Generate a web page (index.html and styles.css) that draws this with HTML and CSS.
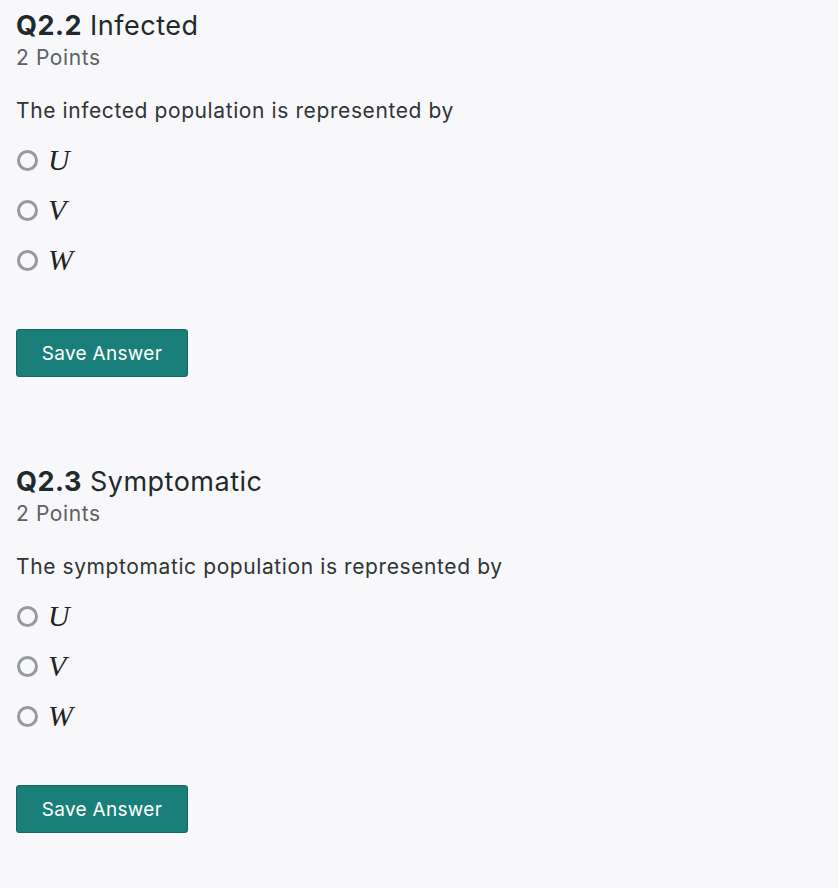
FILE: index.html
```html
<!DOCTYPE html>
<html>
<head>
<meta charset="utf-8">
<link rel="stylesheet" href="styles.css">
</head>
<body>
<div class="page">
  <section class="question">
    <h2 class="q-title"><span class="q-num">Q2.2</span> Infected</h2>
    <div class="q-points">2 Points</div>
    <p class="q-prompt">The infected population is represented by</p>
    <div class="options">
      <label class="option"><span class="radio"></span><span class="math">U</span></label>
      <label class="option"><span class="radio"></span><span class="math">V</span></label>
      <label class="option"><span class="radio"></span><span class="math">W</span></label>
    </div>
    <button class="save">Save Answer</button>
  </section>
  <section class="question">
    <h2 class="q-title"><span class="q-num">Q2.3</span> Symptomatic</h2>
    <div class="q-points">2 Points</div>
    <p class="q-prompt">The symptomatic population is represented by</p>
    <div class="options">
      <label class="option"><span class="radio"></span><span class="math">U</span></label>
      <label class="option"><span class="radio"></span><span class="math">V</span></label>
      <label class="option"><span class="radio"></span><span class="math">W</span></label>
    </div>
    <button class="save">Save Answer</button>
  </section>
</div>
</body>
</html>
```

FILE: styles.css
```css
html, body {
  margin: 0;
  padding: 0;
  background: #f8f8fb;
}
body {
  font-family: Inter, Lato, sans-serif;
  color: #2f3436;
}
.page {
  padding: 8px 16px 0 16px;
  display: flex;
  flex-direction: column;
  gap: 87px;
}
.question {
  display: flex;
  flex-direction: column;
  align-items: flex-start;
}
.q-title {
  margin: 0;
  font-size: 27px;
  font-weight: 400;
  line-height: 36px;
  letter-spacing: 0.5px;
  color: #1e2a2c;
}
.q-num {
  font-weight: 700;
}
.q-points {
  font-size: 21px;
  line-height: 28px;
  letter-spacing: 0.6px;
  color: #5c6163;
}
.q-prompt {
  margin: 25px 0 0 0;
  font-size: 21px;
  line-height: 28px;
  letter-spacing: 0.6px;
  color: #2f3436;
}
.options {
  display: flex;
  flex-direction: column;
  margin-top: 10px;
}
.option {
  display: flex;
  align-items: center;
  height: 50px;
  gap: 10px;
}
.radio {
  width: 15px;
  height: 15px;
  border: 3px solid #959a9b;
  border-radius: 50%;
  margin-left: 1px;
}
.math {
  font-family: "Liberation Serif", "DejaVu Serif", serif;
  font-style: italic;
  font-size: 30px;
  color: #222;
}
.save {
  margin-top: 44px;
  width: 172px;
  height: 48px;
  background: #1b7f79;
  border: 1px solid #126560;
  border-radius: 3px;
  color: #ffffff;
  font-family: Inter, Lato, sans-serif;
  font-size: 19px;
  letter-spacing: 0.3px;
  padding: 0;
  cursor: pointer;
}
```
